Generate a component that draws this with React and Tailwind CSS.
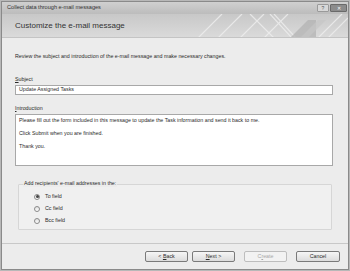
export default function App() {
  const radios = [
    { label: "To field", checked: true },
    { label: "Cc field", checked: false },
    { label: "Bcc field", checked: false },
  ];

  return (
    <div className="w-[350px] h-[271px] bg-[#b8b8b8] p-[1px] font-['Liberation_Sans',sans-serif] text-[#222]">
      <div className="w-full h-full flex flex-col border border-[#8a8a8a] bg-[#ececec]">
        {/* title bar */}
        <div className="h-[12px] flex items-center justify-between bg-gradient-to-b from-[#d0d0d0] to-[#bcbcbc] pl-[5px] pr-[1px]">
          <span className="text-[5.6px] text-[#333] leading-none">Collect data through e-mail messages</span>
          <div className="flex gap-[1px]">
            <div className="w-[12px] h-[8px] border border-[#9a9a9a] bg-[#d8d8d8] rounded-[1px] flex items-center justify-center text-[5px] leading-none text-[#555]">?</div>
            <div className="w-[17px] h-[8px] border border-[#6a6a6a] bg-[#8c8c8c] rounded-[1px] flex items-center justify-center text-[5px] leading-none text-white">✕</div>
          </div>
        </div>

        {/* header band */}
        <div className="relative h-[24px] flex items-center pl-[13px] bg-gradient-to-b from-[#c8c8c8] to-[#dadada] border-b border-[#c4c4c4] overflow-hidden">
          <span className="text-[8px] leading-none text-[#333]">Customize the e-mail message</span>
          <svg className="absolute right-0 top-0" width="170" height="24" viewBox="0 0 170 24">
            <g stroke="#efefef" strokeWidth="1.2" fill="none" opacity="0.8">
              <path d="M20 24 L44 0" />
              <path d="M40 24 L64 0" />
              <path d="M62 24 L86 0" />
              <path d="M72 0 L96 24" />
              <path d="M86 24 L110 0" />
              <path d="M92 0 L114 24" />
              <path d="M96 0 L118 24" />
              <path d="M140 24 L164 0" />
              <path d="M150 24 L170 4" />
            </g>
            <path d="M112 24 L130 6 L138 6 L138 24 Z" fill="#b0b0b0" opacity="0.7" />
            <path d="M122 24 L140 6 L148 6 L130 24 Z" fill="#c6c6c6" opacity="0.7" />
            <path d="M0 24 L170 24" stroke="#c4c4c4" />
          </svg>
        </div>

        {/* body */}
        <div className="flex-1 flex flex-col px-[13px] pt-[15px]">
          <p className="text-[5.3px] leading-[7px] text-[#2a2a2a]">
            Review the subject and introduction of the e-mail message and make necessary changes.
          </p>

          <p className="mt-[16px] text-[5.3px] leading-[7px] text-[#2a2a2a]">
            <span className="underline">S</span>ubject
          </p>
          <div className="mt-[2px] mr-[2px] h-[10px] bg-white border border-[#a8a8a8] flex items-center px-[3px] text-[5.3px] text-[#2a2a2a]">
            Update Assigned Tasks
          </div>

          <p className="mt-[10px] text-[5.3px] leading-[7px] text-[#2a2a2a]">
            <span className="underline">I</span>ntroduction
          </p>
          <div className="mt-[2px] mr-[2px] h-[52px] bg-white border border-[#a8a8a8] px-[3px] pt-[2px] text-[5.3px] leading-[6px] text-[#2a2a2a] flex flex-col gap-[7px]">
            <span>Please fill out the form included in this message to update the Task information and send it back to me.</span>
            <span>Click Submit when you are finished.</span>
            <span>Thank you.</span>
          </div>

          <div className="relative mt-[18px] mx-[3px] h-[46px] border border-[#d6d6d6] bg-[#f0f0f0] rounded-[1px]">
            <span className="absolute -top-[5px] left-[4px] px-[1px] bg-[#ececec] text-[5.3px] leading-[7px] text-[#2a2a2a]">
              Add recipients' e-mail addresses in the:
            </span>
            <div className="pt-[8px] pl-[15px] flex flex-col gap-[5px]">
              {radios.map((r) => (
                <div key={r.label} className="flex items-center gap-[5px] h-[7px]">
                  <span className="w-[6px] h-[6px] rounded-full border border-[#8a8a8a] bg-gradient-to-b from-[#e0e0e0] to-white flex items-center justify-center">
                    {r.checked && <span className="w-[3px] h-[3px] rounded-full bg-[#444]" />}
                  </span>
                  <span className="text-[5.3px] leading-none text-[#2a2a2a]">{r.label}</span>
                </div>
              ))}
            </div>
          </div>
        </div>

        {/* footer */}
        <div className="h-[26px] border-t border-[#c8c8c8] flex items-center justify-end pr-[8px] bg-[#ececec]">
          <div className="flex items-center">
            <button className="w-[43px] h-[11px] border border-[#7a7a7a] rounded-[2px] bg-gradient-to-b from-[#f6f6f6] to-[#dcdcdc] text-[5.3px] leading-none text-[#2a2a2a]">
              &lt; <span className="underline">B</span>ack
            </button>
            <button className="ml-[4px] w-[43px] h-[11px] border border-[#7a7a7a] rounded-[2px] bg-gradient-to-b from-[#f6f6f6] to-[#dcdcdc] text-[5.3px] leading-none text-[#2a2a2a]">
              <span className="underline">N</span>ext &gt;
            </button>
            <button className="ml-[9px] w-[43px] h-[11px] border border-[#bdbdbd] rounded-[2px] bg-[#f2f2f2] text-[5.3px] leading-none text-[#a8a8a8]">
              C<span className="underline">r</span>eate
            </button>
            <button className="ml-[9px] w-[44px] h-[11px] border border-[#7a7a7a] rounded-[2px] bg-gradient-to-b from-[#f6f6f6] to-[#dcdcdc] text-[5.3px] leading-none text-[#2a2a2a]">
              Cancel
            </button>
          </div>
        </div>
      </div>
    </div>
  );
}
